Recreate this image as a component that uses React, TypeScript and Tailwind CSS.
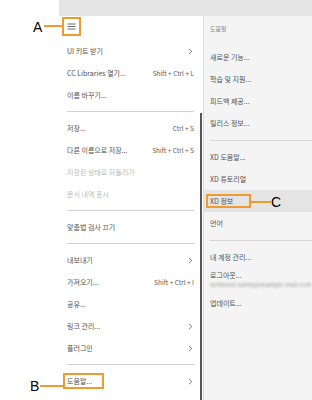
import React from "react";

type Item = {
  label?: string;
  shortcut?: string;
  sub?: boolean;
  disabled?: boolean;
  sep?: boolean;
  boxed?: boolean;
};

const fileMenu: Item[] = [
  { label: "UI 키트 받기", sub: true },
  { label: "CC Libraries 열기...", shortcut: "Shift + Ctrl + L" },
  { label: "이름 바꾸기..." },
  { sep: true },
  { label: "저장...", shortcut: "Ctrl + S" },
  { label: "다른 이름으로 저장...", shortcut: "Shift + Ctrl + S" },
  { label: "저장된 상태로 되돌리기", disabled: true },
  { label: "문서 내역 표시", disabled: true },
  { sep: true },
  { label: "맞춤법 검사 끄기" },
  { sep: true },
  { label: "내보내기", sub: true },
  { label: "가져오기...", shortcut: "Shift + Ctrl + I" },
  { label: "공유..." },
  { label: "링크 관리...", sub: true },
  { label: "플러그인", sub: true },
  { sep: true },
  { label: "도움말...", sub: true, boxed: true },
];

const helpMenu: Item[] = [
  { label: "새로운 기능..." },
  { label: "학습 및 지원..." },
  { label: "피드백 제공..." },
  { label: "릴리스 정보..." },
  { sep: true },
  { label: "XD 도움말..." },
  { label: "XD 튜토리얼" },
  { label: "XD 정보", boxed: true },
  { label: "언어" },
  { sep: true },
  { label: "내 계정 관리..." },
];

function Chevron() {
  return (
    <svg width="5" height="7" viewBox="0 0 5 7" fill="none" stroke="#666" strokeWidth="0.9">
      <path d="M1 0.8 L3.8 3.5 L1 6.2" />
    </svg>
  );
}

function FileRow({ item }: { item: Item }) {
  if (item.sep) {
    return (
      <div className="h-[11px] flex items-center pl-[8px]">
        <div className="h-px w-full bg-[#d2d2d2]" />
      </div>
    );
  }
  const color = item.disabled ? "text-[#bbbbbb]" : "text-[#525252]";
  return (
    <div className={`h-[22px] flex items-center justify-between ${item.boxed ? "pl-[4px]" : "pl-[8px]"}`}>
      {item.boxed ? (
        <span className={`w-[41px] h-[16px] border-2 border-[#ee9a2e] px-[2px] flex items-center text-[7px] leading-none ${color}`}>
          {item.label}
        </span>
      ) : (
        <span className={`text-[7px] leading-none ${color}`}>{item.label}</span>
      )}
      {item.shortcut && <span className="text-[6.5px] leading-none text-[#5a5a5a]">{item.shortcut}</span>}
      {item.sub && (
        <span className="mr-[1px]">
          <Chevron />
        </span>
      )}
    </div>
  );
}

function HelpRow({ item }: { item: Item }) {
  if (item.sep) {
    return (
      <div className="h-[12px] flex items-center pl-[6px]">
        <div className="h-px w-full bg-[#d6d6d6]" />
      </div>
    );
  }
  if (item.boxed) {
    return (
      <div className="h-[22px] flex items-center pl-[2px] bg-[#e4e4e4]">
        <span className="w-[45px] h-[14px] border-2 border-[#ee9a2e] px-[2px] flex items-center text-[7px] leading-none text-[#525252]">
          {item.label}
        </span>
      </div>
    );
  }
  return (
    <div className="h-[22px] flex items-center pl-[6px]">
      <span className="text-[7px] leading-none text-[#525252]">{item.label}</span>
    </div>
  );
}

export default function App() {
  return (
    <div className="relative w-[312px] h-[400px] bg-white overflow-hidden flex font-['Noto_Sans_CJK_KR',sans-serif]">
      {/* gutter for callout labels */}
      <div className="w-[59px] shrink-0" />

      <div className="flex-1 flex flex-col">
        <div className="h-[16px] bg-[#e4e4e4]" />

        <div className="flex flex-1 min-h-0">
          {/* File menu */}
          <div className="w-[144px] flex">
            <div className="flex-1 flex flex-col pr-[6px]">
              <div className="h-[24px] pl-[3px] pt-px">
                <div className="w-[19px] h-[19px] border-2 border-[#ee9a2e] flex items-center justify-center">
                  <svg width="9" height="7" viewBox="0 0 9 7" stroke="#6a6a6a" strokeWidth="1">
                    <path d="M0.5 1H8.5M0.5 3.5H8.5M0.5 6H8.5" />
                  </svg>
                </div>
              </div>
              {fileMenu.map((it, i) => (
                <FileRow key={i} item={it} />
              ))}
            </div>
            <div className="w-[3px] pt-[97px] flex">
              <div className="w-[2px] bg-[#575757]" />
            </div>
          </div>

          {/* Help submenu */}
          <div className="flex-1 bg-[#f4f4f4] border-l border-[#dfdfdf] flex flex-col">
            <div className="h-[30px] flex items-center pb-[4px] pl-[6px]">
              <span className="text-[6px] leading-none text-[#8a8a8a]">도움말</span>
            </div>
            {helpMenu.map((it, i) => (
              <HelpRow key={i} item={it} />
            ))}
            <div className="h-[24px] flex flex-col justify-center pl-[6px]">
              <span className="text-[7px] leading-[9px] text-[#525252]">로그아웃...</span>
              <span className="text-[6px] leading-[9px] text-[#9a9a9a] blur-[1px]">someone.name@example-mail.com</span>
            </div>
            <div className="h-[22px] flex items-center pl-[6px]">
              <span className="text-[7px] leading-none text-[#525252]">업데이트...</span>
            </div>
          </div>
        </div>
      </div>

      {/* callouts */}
      <span className="absolute left-[33px] top-[20px] text-[14px] leading-none text-black font-['Liberation_Sans',sans-serif]">A</span>
      <div className="absolute left-[44px] top-[25px] w-[18px] h-[2px] bg-[#ee9a2e]" />

      <span className="absolute left-[30px] top-[379px] text-[14px] leading-none text-black font-['Liberation_Sans',sans-serif]">B</span>
      <div className="absolute left-[40px] top-[385px] w-[23px] h-[2px] bg-[#ee9a2e]" />

      <div className="absolute left-[251px] top-[201px] w-[20px] h-[2px] bg-[#ee9a2e]" />
      <span className="absolute left-[271px] top-[195px] text-[14px] leading-none text-black font-['Liberation_Sans',sans-serif]">C</span>
    </div>
  );
}
